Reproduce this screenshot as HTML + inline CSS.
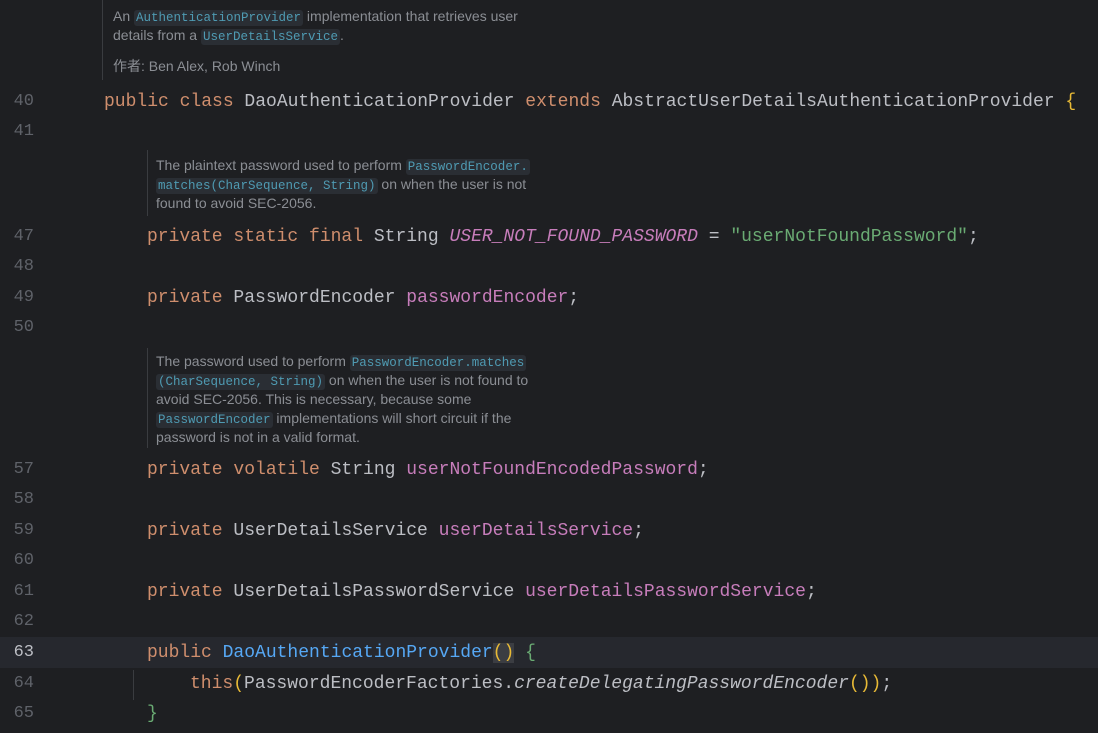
<!DOCTYPE html>
<html><head><meta charset="utf-8"><style>
html,body{margin:0;padding:0;background:#1e1f22;width:1098px;height:733px;overflow:hidden;position:relative}
.ln{position:absolute;left:0;width:34px;text-align:right;font:17px "Liberation Mono",monospace;color:#5f6269}
.c{position:absolute;font:18px/22px "Liberation Mono",monospace;color:#bcbec4;white-space:pre}
.k{color:#cf8e6d}.f{color:#c77dbb}.s{color:#6aab73}.i{font-style:italic}.m{color:#56a8f5}.y{color:#e8ba36}.g{color:#6aab73}
.doc{position:absolute;font:14px/19px "Liberation Sans","Noto Sans CJK SC",sans-serif;color:#8b8e94;white-space:nowrap}
.cd{font:12.5px "Liberation Mono",monospace;color:#4f9bb3;background:#2a2e34;border-radius:3px;padding:1px 2px}
.vl{position:absolute;width:1px;background:#3a3c40}
</style></head><body>
<div class="vl" style="left:102px;top:0;height:80px"></div>
<div class="doc" style="left:113px;top:7px">An <span class="cd">AuthenticationProvider</span> implementation that retrieves user<br>details from a <span class="cd">UserDetailsService</span>.</div>
<div class="doc" style="left:113px;top:57px">作者: Ben Alex, Rob Winch</div>

<div class="vl" style="left:147px;top:150px;height:66px"></div>
<div class="doc" style="left:156px;top:156px">The plaintext password used to perform <span class="cd">PasswordEncoder.</span><br><span class="cd">matches(CharSequence, String)</span> on when the user is not<br>found to avoid SEC-2056.</div>

<div class="vl" style="left:147px;top:348px;height:100px"></div>
<div class="doc" style="left:156px;top:352px">The password used to perform <span class="cd">PasswordEncoder.matches</span><br><span class="cd">(CharSequence, String)</span> on when the user is not found to<br>avoid SEC-2056. This is necessary, because some<br><span class="cd">PasswordEncoder</span> implementations will short circuit if the<br>password is not in a valid format.</div>

<div style="position:absolute;left:0;top:637px;width:1098px;height:31px;background:#26282e"></div>
<div class="vl" style="left:133px;top:670px;height:30px"></div>

<div class="ln" style="top:92px">40</div>
<div class="ln" style="top:122px">41</div>
<div class="ln" style="top:227px">47</div>
<div class="ln" style="top:257px">48</div>
<div class="ln" style="top:288px">49</div>
<div class="ln" style="top:318px">50</div>
<div class="ln" style="top:460px">57</div>
<div class="ln" style="top:490px">58</div>
<div class="ln" style="top:521px">59</div>
<div class="ln" style="top:551px">60</div>
<div class="ln" style="top:582px">61</div>
<div class="ln" style="top:612px">62</div>
<div class="ln" style="top:643px;color:#bcbec4">63</div>
<div class="ln" style="top:674px">64</div>
<div class="ln" style="top:704px">65</div>

<div class="c" style="left:104px;top:91px"><span class="k">public class</span> DaoAuthenticationProvider <span class="k">extends</span> AbstractUserDetailsAuthenticationProvider <span class="y">{</span></div>
<div class="c" style="left:147px;top:226px"><span class="k">private static final</span> String <span class="f i">USER_NOT_FOUND_PASSWORD</span> = <span class="s">"userNotFoundPassword"</span>;</div>
<div class="c" style="left:147px;top:287px"><span class="k">private</span> PasswordEncoder <span class="f">passwordEncoder</span>;</div>
<div class="c" style="left:147px;top:459px"><span class="k">private volatile</span> String <span class="f">userNotFoundEncodedPassword</span>;</div>
<div class="c" style="left:147px;top:520px"><span class="k">private</span> UserDetailsService <span class="f">userDetailsService</span>;</div>
<div class="c" style="left:147px;top:581px"><span class="k">private</span> UserDetailsPasswordService <span class="f">userDetailsPasswordService</span>;</div>
<div class="c" style="left:147px;top:642px"><span class="k">public</span> <span class="m">DaoAuthenticationProvider</span><span class="y" style="background:#3b3d42">()</span> <span class="g">{</span></div>
<div class="c" style="left:190px;top:673px"><span class="k">this</span><span class="y">(</span>PasswordEncoderFactories.<span class="i">createDelegatingPasswordEncoder</span><span class="y">()</span><span class="y">)</span>;</div>
<div class="c" style="left:147px;top:703px"><span class="g">}</span></div>
</body></html>
